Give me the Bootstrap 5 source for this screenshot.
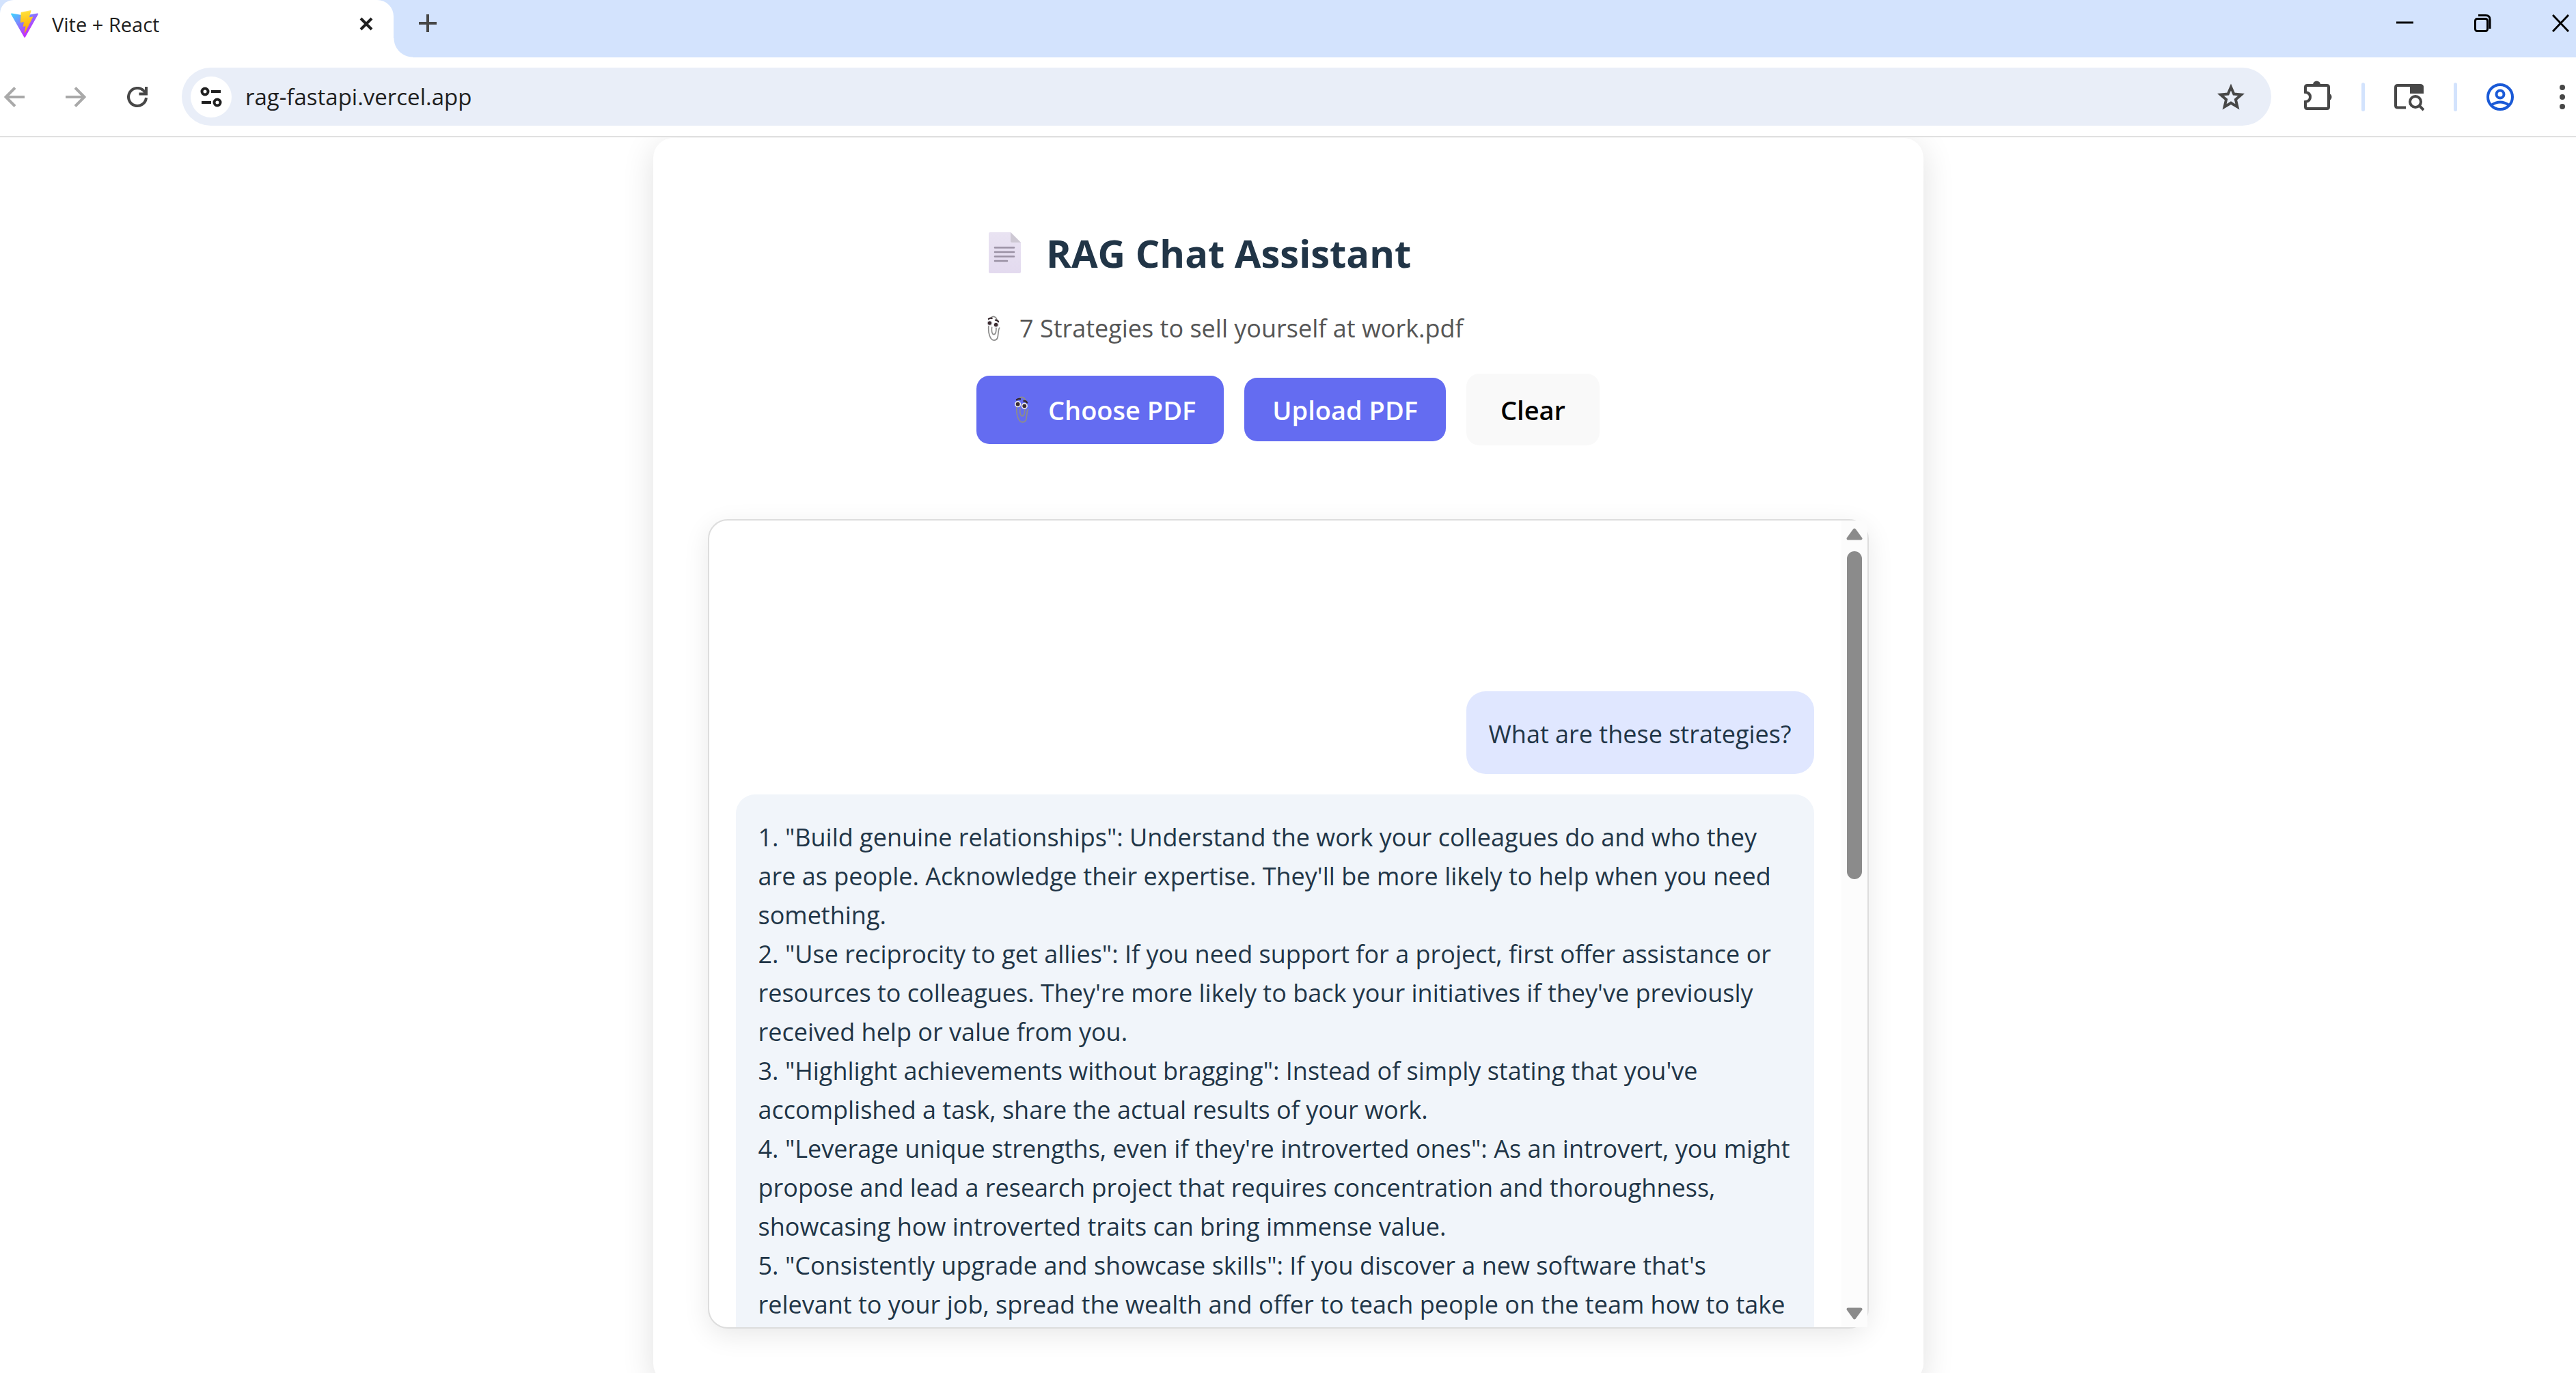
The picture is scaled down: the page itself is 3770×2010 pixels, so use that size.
<!DOCTYPE html>
<html lang="en">
<head>
<meta charset="utf-8">
<meta name="viewport" content="width=device-width, initial-scale=1">
<title>Vite + React</title>
<link rel="stylesheet" href="https://cdn.jsdelivr.net/npm/bootstrap@5.3.0/dist/css/bootstrap.min.css">
<style>
html, body { height: 100%; overflow: hidden; }
body { font-family: "Open Sans", "Noto Sans", sans-serif; font-size: 36px; color: #213547; background: #fff; }
button.plain { border: 0; background: none; padding: 0; display: flex; align-items: center; justify-content: center; color: #474747; }
svg { display: block; flex: none; }

.tab-strip { height: 84px; background: #d3e3fd; }
.tab-item { width: 576px; height: 84px; background: #fff; border-radius: 20px 24px 0 0; padding: 0 30px 14px 16px; position: relative; font-size: 29px; color: #1f1f1f; }
.tab-item::after { content: ""; position: absolute; left: 100%; bottom: 0; width: 28px; height: 28px; background: radial-gradient(circle at 100% 0, transparent 27px, #fff 28px); }
.tab-item .tab-name { padding: 2px 0 0 20px; }
.new-tab { margin: 0 0 16px 37px; }
.win-controls { gap: 89px; padding: 0 10px 17px 0; }
.win-controls button.plain { color: #000; }

.tool-row { height: 117px; border-bottom: 2px solid #e0e0e0; padding: 0 16px 0 6px; }
.nav-btns { gap: 60px; margin-right: 50px; }
.nav-btns button:disabled { color: #a9a9a9; }
.omnibox { height: 85px; border-radius: 43px; background: #e9eef8; padding: 0 39px 0 13px; }
.site-info { width: 60px; height: 60px; border-radius: 50%; background: #fff !important; color: #1f1f1f !important; }
.omnibox input { border: 0; background: none; outline: 0; color: #1f1f1f; font-size: 33px; padding: 0 0 0 20px; min-width: 0; }
.tool-right { gap: 43px; margin-left: 48px; }
.tool-sep { width: 5px; height: 42px; border-radius: 3px; background: #d3e3fd; }

.view-area { min-height: 0; overflow: hidden; }
.app-panel { width: 100%; max-width: 1859px; padding: 128px 80px 80px; border-radius: 29px; background: #fff; box-shadow: 0 10px 48px rgba(0,0,0,.12); margin-top: 1px; }
.head-block { width: fit-content; margin-bottom: 108px; }
.app-title { font-size: 56px; line-height: 80px; font-weight: 700; gap: 37px; padding-left: 18px; margin-bottom: 43px; }
.file-name { line-height: 56px; color: #555; gap: 28px; padding-left: 15px; margin-bottom: 38px; }
.btn-set { gap: 30px; }
.btn-set .btn { border: 0; border-radius: 19px; font-size: 38px; font-weight: 600; line-height: 57px; padding: 19px 41px 17px; }
.btn-set .btn-indigo { background: #646cf1; color: #fff; }
.btn-set .btn-choose { padding: 22px 41px 21px 56px; gap: 28px; }
.btn-set .btn-clear { background: #f9f9f9; color: #000; padding: 25px 50px 23px; }

.chat-box { height: 1185px; border: 2px solid #ddd; border-radius: 29px; background: #fff; box-shadow: 0 10px 38px rgba(0,0,0,.09); }
.chat-log { overflow: hidden; padding: 250px 40px 0 39px; gap: 30px; min-width: 0; }
.bubble { border-radius: 28px; padding: 34px 33px 30px; line-height: 57px; flex: none; }
.bubble-user { background: #e0e7ff; }
.bubble-bot { background: #f1f5fa; white-space: nowrap; }
.scroll-rail { width: 38px; background: #fcfcfc; padding: 11px 0 11px; }
.scroll-rail .thumb { width: 22px; height: 480px; border-radius: 11px; background: #8b8b8b; margin-top: 16px; }
</style>
<script src="https://cdn.jsdelivr.net/npm/bootstrap@5.3.0/dist/js/bootstrap.bundle.min.js"></script>
</head>
<body class="d-flex flex-column">

<svg width="0" height="0" class="position-absolute" aria-hidden="true">
  <symbol id="clippy" viewBox="0 0 21 40">
    <path d="M7 3C10 0 16 2 15.500 8M3 16C2 26 5 38 11.500 38C20 38 16 26 19.500 19M8 18C7 26 9 29 11 29C14 29 15 24 14.500 18" fill="none" stroke="#8d8d8c" stroke-width="1.800" stroke-linecap="round"/>
    <circle cx="4.600" cy="11.700" r="4.600" fill="#e8e8ec"/><circle cx="14.300" cy="14.300" r="4.600" fill="#e8e8ec"/>
    <circle cx="4.600" cy="11.700" r="2.900" fill="#3b2b30"/><circle cx="14.300" cy="14.300" r="2.900" fill="#3b2b30"/>
    <path d="M3 5.200q2.500-2 5-1M13.500 7q3-.5 4.500 2.500" stroke="#33262b" stroke-width="2.400" stroke-linecap="round" fill="none"/>
  </symbol>
</svg>

<header>
  <div class="tab-strip d-flex align-items-center">
    <div class="tab-item d-flex align-items-center">
      <svg width="40" height="40" viewBox="0 0 256 257" aria-hidden="true">
        <defs>
          <linearGradient id="va" x1="-.8%" x2="57.600%" y1="7.700%" y2="78.400%"><stop offset="0" stop-color="#41d1ff"/><stop offset="1" stop-color="#bd34fe"/></linearGradient>
          <linearGradient id="vb" x1="43.400%" x2="50.300%" y1="2.200%" y2="89%"><stop offset="0" stop-color="#ffea83"/><stop offset=".083" stop-color="#ffdd35"/><stop offset="1" stop-color="#ffa800"/></linearGradient>
        </defs>
        <path fill="url(#va)" d="M255.153 37.938L134.897 252.976c-2.483 4.440-8.862 4.466-11.382.048L.875 37.958c-2.746-4.814 1.371-10.646 6.827-9.670l120.385 21.517a6.537 6.537 0 0 0 2.322-.004l117.867-21.483c5.438-.991 9.574 4.796 6.877 9.620Z"/>
        <path fill="url(#vb)" d="M185.432.063L96.440 17.501a3.268 3.268 0 0 0-2.634 3.014l-5.474 92.456a3.268 3.268 0 0 0 3.997 3.378l24.777-5.718c2.318-.535 4.413 1.507 3.936 3.838l-7.361 36.047c-.495 2.426 1.782 4.500 4.151 3.780l15.304-4.649c2.372-.720 4.652 1.360 4.150 3.788l-11.698 56.621c-.732 3.542 3.979 5.473 5.943 2.437l1.313-2.028l72.516-144.720c1.215-2.423-.880-5.186-3.540-4.672l-25.505 4.922c-2.396.462-4.435-1.770-3.759-4.114l16.646-57.705c.677-2.350-1.370-4.583-3.769-4.113Z"/>
      </svg>
      <span class="tab-name flex-grow-1">Vite + React</span>
      <button class="plain text-dark" aria-label="Close tab"><svg width="20" height="20" viewBox="0 0 20 20"><path d="M2 2l16 16M18 2L2 18" stroke="#1f1f1f" stroke-width="4"/></svg></button>
    </div>
    <button class="plain new-tab" aria-label="New tab"><svg width="26" height="26" viewBox="0 0 26 26"><path d="M13 0v26M0 13h26" stroke="currentColor" stroke-width="4"/></svg></button>
    <div class="win-controls d-flex align-items-center ms-auto">
      <button class="plain" aria-label="Minimize"><svg width="25" height="26" viewBox="0 0 25 26"><path d="M0 12h25" stroke="currentColor" stroke-width="3"/></svg></button>
      <button class="plain" aria-label="Restore"><svg width="25" height="26" viewBox="0 0 25 26" fill="none" stroke="currentColor" stroke-width="3"><rect x="1.500" y="6.500" width="18" height="18" rx="3"/><path d="M6 1.500h11q6 0 6 6V21"/></svg></button>
      <button class="plain" aria-label="Close"><svg width="25" height="26" viewBox="0 0 25 26"><path d="M1 1l23 24M24 1L1 25" stroke="currentColor" stroke-width="3"/></svg></button>
    </div>
  </div>

  <div class="tool-row d-flex align-items-center">
    <div class="nav-btns d-flex">
      <button class="plain" disabled aria-label="Back"><svg width="30" height="30" viewBox="0 0 30 30" fill="none" stroke="currentColor" stroke-width="4"><path d="M30 15H3M16 1.500L2.500 15L16 28.500"/></svg></button>
      <button class="plain" disabled aria-label="Forward"><svg width="30" height="30" viewBox="0 0 30 30" fill="none" stroke="currentColor" stroke-width="4"><path d="M0 15h27M14 1.500L27.500 15L14 28.500"/></svg></button>
      <button class="plain" aria-label="Reload"><svg width="30" height="30" viewBox="0 0 30 30" fill="none" stroke="currentColor" stroke-width="4"><path d="M28 16A13 13 0 1 1 24.500 6L28 9.500M28 0v10.500H17.500"/></svg></button>
    </div>
    <div class="omnibox d-flex align-items-center flex-grow-1">
      <button class="plain site-info" aria-label="Site information"><svg width="32" height="30" viewBox="0 0 32 30" fill="none" stroke="currentColor" stroke-width="4"><circle cx="7" cy="7" r="4.500"/><path d="M16 7h14M2 23h14"/><circle cx="25" cy="23" r="4.500"/></svg></button>
      <input class="flex-grow-1" type="text" value="rag-fastapi.vercel.app" aria-label="Address">
      <button class="plain" aria-label="Bookmark"><svg width="40" height="40" viewBox="0 0 40 40" fill="none" stroke="currentColor" stroke-width="4"><path d="M20 5.500l4.300 10.100 10.900.9-8.300 7.200 2.500 10.700L20 28.700l-9.400 5.700 2.500-10.700-8.300-7.200 10.900-.9z"/></svg></button>
    </div>
    <div class="tool-right d-flex align-items-center">
      <button class="plain" aria-label="Extensions"><svg width="41" height="48" viewBox="0 1 41 48"><path d="M4.500 8h29q2.500 0 2.500 2.500v29q0 2.500-2.500 2.500H4.500Q2 42 2 39.500V32q7-1 7-7t-7-7v-7.500Q2 8 4.500 8z" fill="none" stroke="currentColor" stroke-width="4"/><path d="M13 7a5.500 5.500 0 0 1 11 0zM35 19.500a5.500 5.500 0 0 1 0 11z" fill="currentColor"/></svg></button>
      <span class="tool-sep"></span>
      <button class="plain" aria-label="Search tabs"><svg width="44" height="42" viewBox="0 0 44 42" fill="none" stroke="currentColor" stroke-width="4"><path d="M17 36.500H5q-3 0-3-3V7q0-3 3-3h33q3 0 3 3v8"/><path d="M23 3h16q4 0 4 4v9H23z" fill="currentColor" stroke="none"/><circle cx="31" cy="28" r="8"/><path d="M36 33l7 7"/></svg></button>
      <span class="tool-sep"></span>
      <button class="plain" aria-label="Profile"><svg width="40" height="40" viewBox="0 0 40 40" fill="none" stroke="#1a5ad7" stroke-width="4"><circle cx="20" cy="20" r="18"/><circle cx="20" cy="16" r="5.500"/><path d="M7 32q13-9 26 0"/></svg></button>
      <button class="plain ms-4" aria-label="Menu"><svg width="8" height="36" viewBox="0 0 8 36" fill="currentColor"><circle cx="4" cy="4" r="4"/><circle cx="4" cy="18" r="4"/><circle cx="4" cy="32" r="4"/></svg></button>
    </div>
  </div>
</header>

<main class="view-area flex-grow-1">
  <div class="app-panel mx-auto">
    <div class="head-block mx-auto">
      <h1 class="app-title d-flex align-items-center">
        <svg width="47" height="60" viewBox="0 0 47 60" aria-hidden="true"><defs><linearGradient id="dg" x2="0" y2="1"><stop stop-color="#e9e3f2"/><stop offset="1" stop-color="#e3daef"/></linearGradient></defs><path d="M2 0h30l15 15v43q0 2-2 2H2q-2 0-2-2V2q0-2 2-2z" fill="url(#dg)"/><path d="M32 0l15 15H34q-2 0-2-2z" fill="#cdc8d3"/><path d="M9 22.500h28M9 29h28M9 35.500h28M9 42h18" stroke="#9a91a4" stroke-width="2.500" stroke-linecap="round"/></svg>
        <span>RAG Chat Assistant</span>
      </h1>
      <p class="file-name d-flex align-items-center">
        <svg width="20" height="38" aria-hidden="true"><use href="#clippy"/></svg>
        <span>7 Strategies to sell yourself at work.pdf</span>
      </p>
      <div class="btn-set d-flex align-items-center">
        <button class="btn btn-indigo btn-choose d-flex align-items-center" type="button"><svg width="21" height="40" aria-hidden="true"><use href="#clippy"/></svg>Choose PDF</button>
        <button class="btn btn-indigo" type="button">Upload PDF</button>
        <button class="btn btn-clear" type="button">Clear</button>
      </div>
    </div>

    <section class="chat-box d-flex">
      <div class="chat-log d-flex flex-column flex-grow-1">
        <div class="bubble bubble-user align-self-end">What are these strategies?</div>
        <div class="bubble bubble-bot">1. "Build genuine relationships": Understand the work your colleagues do and who they<br>are as people. Acknowledge their expertise. They'll be more likely to help when you need<br>something.<br>2. "Use reciprocity to get allies": If you need support for a project, first offer assistance or<br>resources to colleagues. They're more likely to back your initiatives if they've previously<br>received help or value from you.<br>3. "Highlight achievements without bragging": Instead of simply stating that you've<br>accomplished a task, share the actual results of your work.<br>4. "Leverage unique strengths, even if they're introverted ones": As an introvert, you might<br>propose and lead a research project that requires concentration and thoroughness,<br>showcasing how introverted traits can bring immense value.<br>5. "Consistently upgrade and showcase skills": If you discover a new software that's<br>relevant to your job, spread the wealth and offer to teach people on the team how to take</div>
      </div>
      <div class="scroll-rail d-flex flex-column align-items-center" aria-hidden="true">
        <svg width="24" height="18" viewBox="0 0 24 18"><path d="M12 2.500L21.500 15.500H2.500z" fill="#8b8b8b" stroke="#8b8b8b" stroke-width="4" stroke-linejoin="round"/></svg>
        <div class="thumb"></div>
        <svg class="mt-auto" width="24" height="18" viewBox="0 0 24 18"><path d="M12 15.500L21.500 2.500H2.500z" fill="#8b8b8b" stroke="#8b8b8b" stroke-width="4" stroke-linejoin="round"/></svg>
      </div>
    </section>
  </div>
</main>
</body>
</html>
